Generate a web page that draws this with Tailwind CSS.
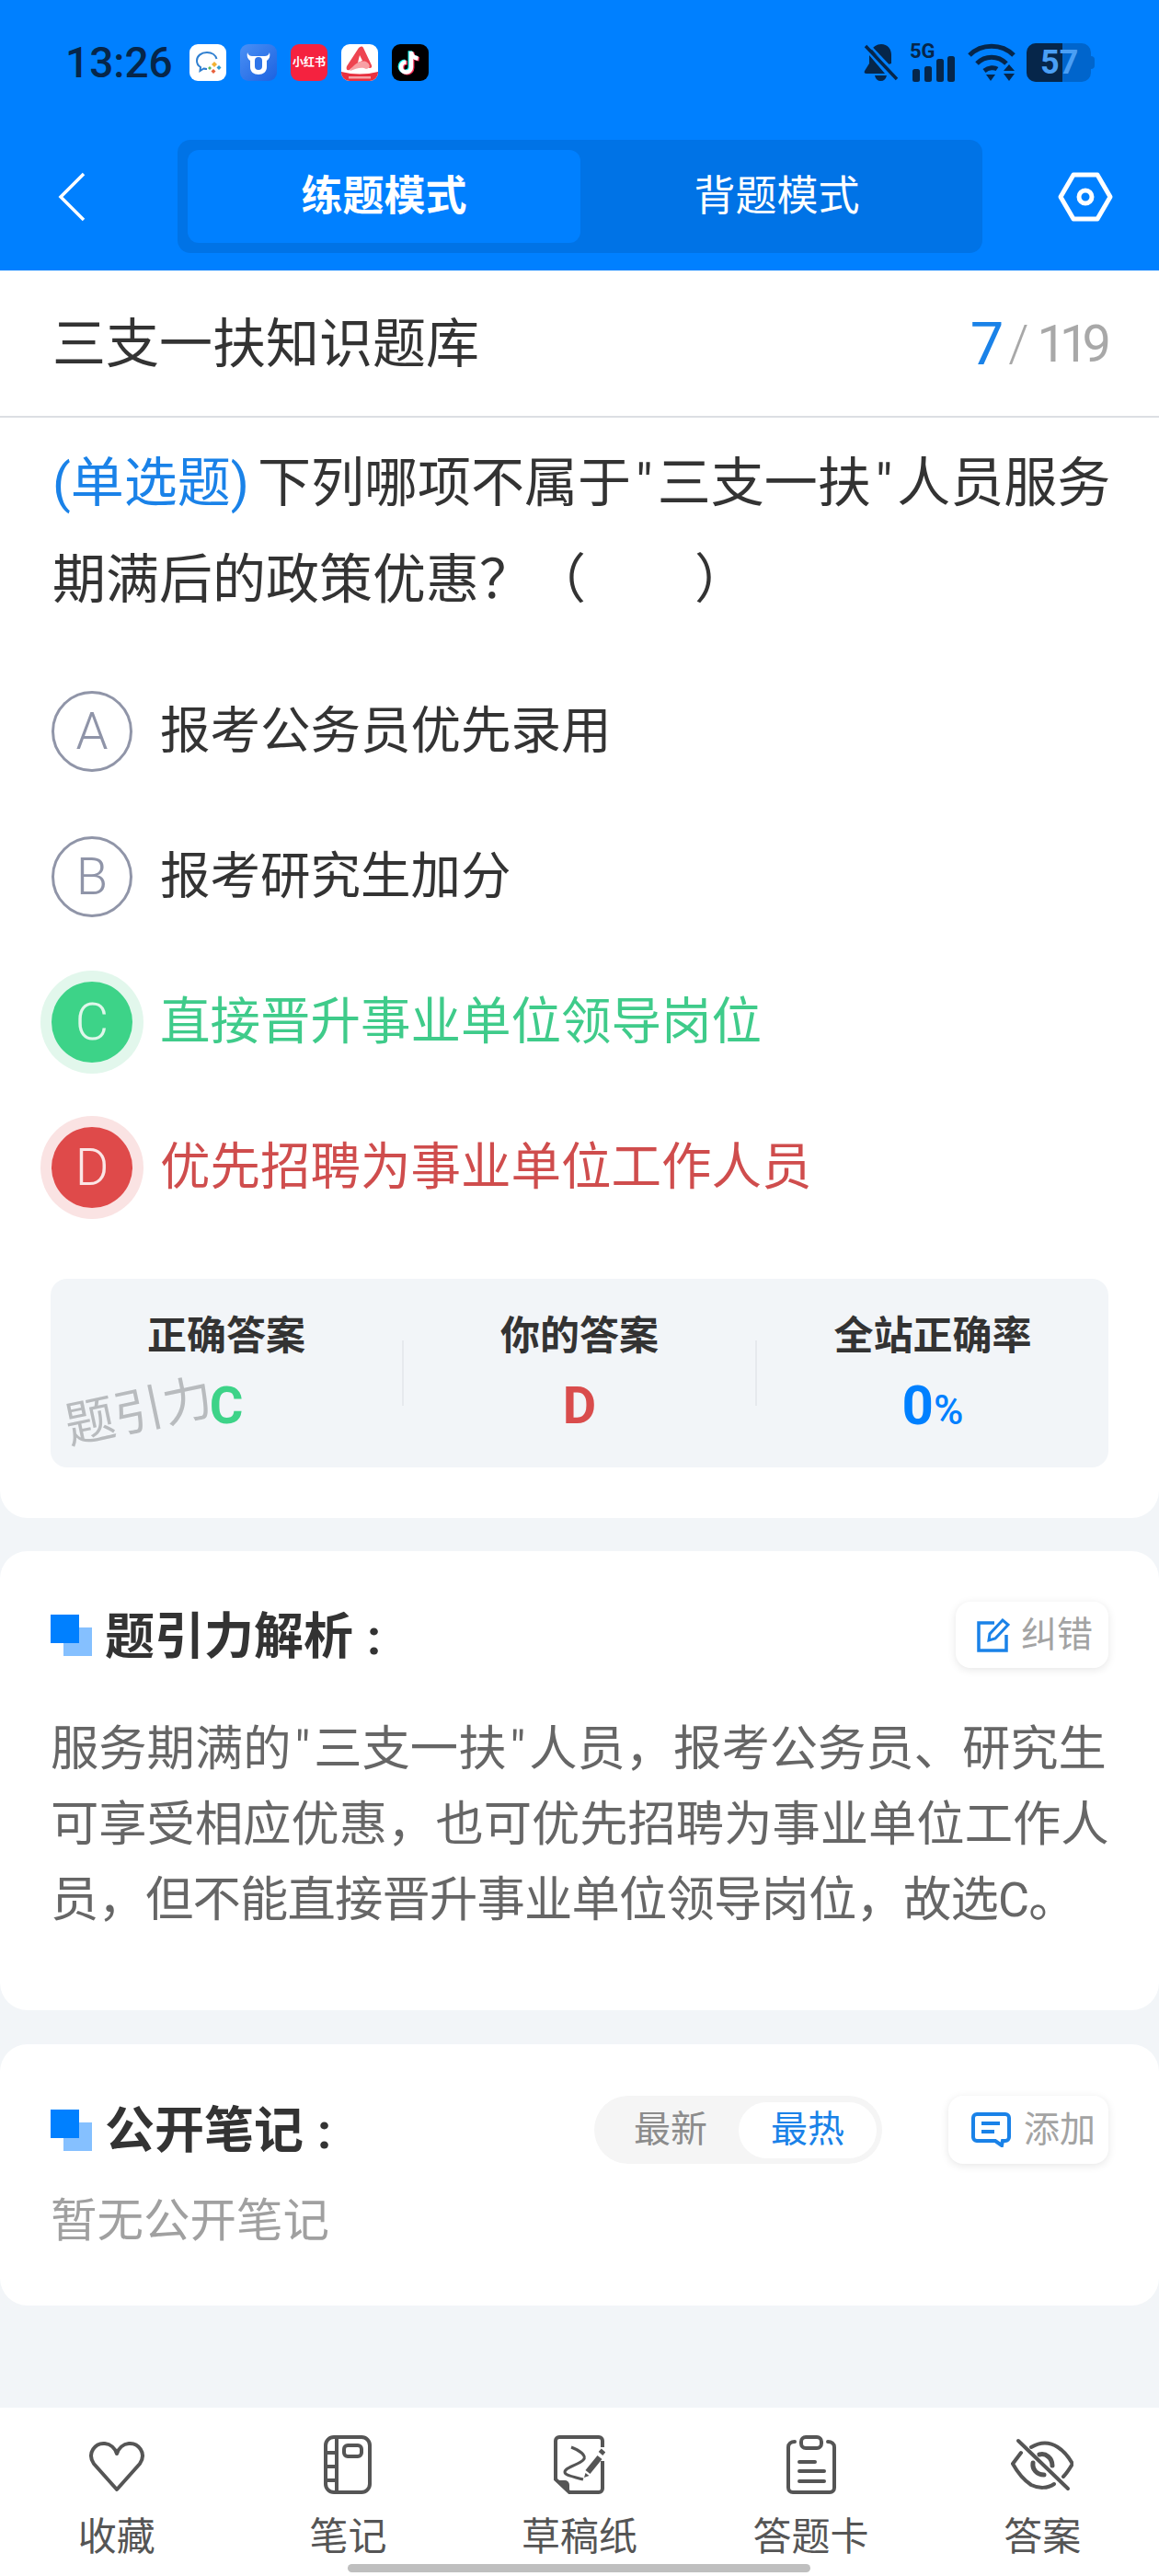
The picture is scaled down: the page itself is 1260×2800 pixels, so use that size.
<!DOCTYPE html>
<html lang="zh">
<head>
  <meta charset="UTF-8">
  <meta name="viewport" content="width=device-width, initial-scale=1.0">
  <title>练题模式</title>
  <script src="https://cdn.jsdelivr.net/npm/@tailwindcss/browser@4"></script>
</head>
<body>
<div class="relative w-[1260px] h-[2800px] overflow-hidden flex flex-col bg-[#f2f5f8] font-['Roboto','Noto_Sans_CJK_SC',sans-serif]">

  <!-- header -->
  <header class="h-[294px] shrink-0 bg-[#0080ff]">
    <div class="h-[136px] mb-4 flex items-center justify-between pl-[71px] pr-[70px]">
      <div class="flex items-center">
        <span class="w-[135px] text-[46px] leading-none font-medium text-[#06264a]">13:26</span>
        <div class="flex items-center gap-[15px]">
          <svg class="w-10 h-10" viewBox="0 0 40 40"><rect width="40" height="40" rx="9" fill="#fff"/><path d="M19 9c-6.500 0-11 4-11 9 0 3 1.500 5.500 4 7l-.5 4 4-2.500c1 .3 2.500.5 3.500.5" fill="none" stroke="#2f7fd0" stroke-width="2"/><path d="M19 9c5.500 0 9.500 3 10.500 7" fill="none" stroke="#2f7fd0" stroke-width="2"/><path d="M27 19l3 3-3 3-3-3z" fill="#f2b233"/><path d="M32 23l2.500 2.500-2.500 2.500-2.500-2.500z" fill="#2f9ad0"/><path d="M26 27l2.500 2.500-2.500 2.500-2.500-2.500z" fill="#e8603c"/><path d="M22 24l2 2-2 2-2-2z" fill="#5cb85c"/></svg>
          <svg class="w-10 h-10" viewBox="0 0 40 40"><defs><linearGradient id="ox" x1="0" y1="0" x2="1" y2="1"><stop offset="0" stop-color="#4a90f5"/><stop offset="1" stop-color="#1c62e0"/></linearGradient></defs><rect width="40" height="40" rx="9" fill="url(#ox)"/><path d="M8 9c1 3 3 4 5 4h14c2 0 4-1 5-4 1 4 0 7-3 9v7c0 5-4 8-9 8s-9-3-9-8v-7c-3-2-4-5-3-9z" fill="#fff"/><rect x="16" y="14" width="8" height="14" rx="4" fill="#2f74e8"/></svg>
          <div class="w-10 h-10 rounded-[9px] bg-[#f5223f] flex items-center justify-center text-[12px] leading-none font-bold text-white whitespace-nowrap">小红书</div>
          <svg class="w-10 h-10" viewBox="0 0 40 40"><rect width="40" height="40" rx="9" fill="#fff"/><path d="M0 30q20 5 40 0v1a9 9 0 0 1-9 9H9a9 9 0 0 1-9-9z" fill="#e8303f"/><rect x="8" y="35" width="24" height="2.500" fill="#f5a3a8"/><path d="M19 4c2-2 4-2 5 0l9 19c1 3-2 4-4 2l-4-5c-5-2-11 4-16 8-3 1-4-1-3-4z" fill="#ee4450"/><path d="M20 12l3 6-5 2z" fill="#fff"/><path d="M9 29c5-7 11-12 18-10 4 2 6 7 0 8-5-3-11 0-18 2z" fill="#f8a0a5"/></svg>
          <svg class="w-10 h-10" viewBox="0 0 40 40"><rect width="40" height="40" rx="9" fill="#000"/><path d="M21 8v17a5.500 5.500 0 1 1-5.500-5.500M21 8c0 4 3 7 7.500 7.500" fill="none" stroke="#25f4ee" stroke-width="4.500" transform="translate(-1.200 -.8)"/><path d="M21 8v17a5.500 5.500 0 1 1-5.500-5.500M21 8c0 4 3 7 7.500 7.500" fill="none" stroke="#fe2c55" stroke-width="4.500" transform="translate(1.200 .8)"/><path d="M21 8v17a5.500 5.500 0 1 1-5.500-5.500M21 8c0 4 3 7 7.500 7.500" fill="none" stroke="#fff" stroke-width="4.500"/></svg>
        </div>
      </div>
      <div class="flex items-center">
        <svg class="w-[38px] h-[42px]" viewBox="0 0 38 42" fill="#06264a"><path d="M8 8C10 4 14 1 19 1c7 0 11 5 11 12v9l-3 1z"/><path d="M6 13v9l-5 8c-1 2 0 3 2 3h20z"/><path d="M12 35h13c-1 4-3 6-6.500 6S13 39 12 35z"/><path d="M2 3l34 36" stroke="#06264a" stroke-width="3.500"/><path d="M5 1l34 36" stroke="#0080ff" stroke-width="2.500"/></svg>
        <div class="relative w-[50px] h-[42px] ml-[12px]">
          <span class="absolute left-0 -top-[2px] text-[22px] leading-none font-bold text-[#06264a]">5G</span>
          <svg class="absolute left-0 top-0 w-[50px] h-[42px]" viewBox="0 0 50 42" fill="#06264a"><rect x="3" y="28" width="8" height="14" rx="2.500"/><rect x="16" y="25" width="8" height="17" rx="2.500"/><rect x="29" y="17" width="8" height="25" rx="2.500"/><rect x="41" y="14" width="8" height="28" rx="2.500"/></svg>
        </div>
        <svg class="w-[52px] h-[42px] ml-[13px]" viewBox="0 0 52 42" fill="none" stroke="#06264a" stroke-width="5"><path d="M2 13C15 0 37 0 50 13"/><path d="M10 22c9-9 23-9 32 0"/><path d="M18 30c5-4 11-4 14-2"/><path d="M20 34h10l-5 7z" fill="#06264a" stroke="none"/><path d="M45 23l6 7H39z" fill="#06264a" stroke="none"/><path d="M39 33h12l-6 8z" fill="#06264a" stroke="none"/></svg>
        <div class="relative w-[74px] h-[42px] ml-[12px]">
          <div class="absolute left-0 top-0 w-[70px] h-[42px] rounded-[10px] bg-[#0065cc] overflow-hidden"><div class="w-[39px] h-full bg-[#06264a]"></div></div>
          <div class="absolute right-0 top-[14px] w-[4px] h-[14px] rounded-r-full bg-[#0065cc]"></div>
          <span class="absolute left-[15px] top-[3px] text-[36px] leading-[36px] font-bold text-[#4a9ff5]">57</span>
        </div>
      </div>
    </div>
    <div class="flex items-center pl-[60px]">
      <svg class="w-9 h-[54px]" viewBox="0 0 36 54" fill="none" stroke="#fff" stroke-width="3.500"><path d="M31 2 6 27l25 25"/></svg>
      <div class="ml-[97px] w-[875px] h-[123px] p-[11px] rounded-[14px] bg-[#0073e6] flex">
        <div class="w-[427px] rounded-[12px] bg-[#0080ff] flex items-center justify-center text-[45px] font-bold text-white">练题模式</div>
        <div class="w-[425px] ml-[1px] flex items-center justify-center text-[45px] text-white">背题模式</div>
      </div>
      <svg class="ml-[82px] w-[60px] h-[54px]" viewBox="0 0 60 54" fill="none" stroke="#fff" stroke-width="5" stroke-linejoin="round"><path d="M17 3h26l14 24-14 24H17L3 27z"/><circle cx="30" cy="27" r="7"/></svg>
    </div>
  </header>

  <!-- question card -->
  <section class="h-[1356px] shrink-0 bg-white rounded-b-[30px]">
    <div class="h-[160px] pt-[2px] px-[57px] flex items-center justify-between border-b-2 border-[#dcdfe3]">
      <h1 class="text-[58px] font-normal text-[#333]">三支一扶知识题库</h1>
      <div class="flex items-center text-[#a8a8a8]">
        <span class="text-[65px] leading-[70px] text-[#1a82e8]">7</span>
        <span class="ml-[5px] text-[56px] leading-[70px] font-light">/</span>
        <span class="ml-[9px] text-[56px] leading-[70px] tracking-[-7px] mr-[2px]">119</span>
      </div>
    </div>
    <p class="mt-[19px] px-[57px] text-[58px] leading-[105px] text-[#333] whitespace-nowrap"><span class="text-[#1a82e8]">(单选题)</span><span class="ml-[9px]">下列哪项不属于</span><span class="px-[5px]">"</span>三支一扶<span class="px-[5px]">"</span>人员服务<br>期满后的政策优惠？（<span class="inline-block w-[118px]"></span>）</p>

    <div class="mt-[33px] pl-[56px]">
      <div class="h-[158px] flex items-center">
        <div class="w-[88px] h-[88px] rounded-full border-[3px] border-[#9095a8] flex items-center justify-center text-[56px] font-light text-[#8f94a8]">A</div>
        <span class="ml-[30px] text-[54.500px] text-[#333]">报考公务员优先录用</span>
      </div>
      <div class="h-[158px] flex items-center">
        <div class="w-[88px] h-[88px] rounded-full border-[3px] border-[#9095a8] flex items-center justify-center text-[56px] font-light text-[#8f94a8]">B</div>
        <span class="ml-[30px] text-[54.500px] text-[#333]">报考研究生加分</span>
      </div>
      <div class="h-[158px] flex items-center">
        <div class="w-[88px] h-[88px] rounded-full bg-[#3dd388] ring-[12px] ring-[#e2f7ec] flex items-center justify-center text-[56px] font-light text-[#dff7ea]">C</div>
        <span class="ml-[30px] text-[54.500px] text-[#3fcb8a]">直接晋升事业单位领导岗位</span>
      </div>
      <div class="h-[158px] flex items-center">
        <div class="w-[88px] h-[88px] rounded-full bg-[#df4a4a] ring-[12px] ring-[#fae3e3] flex items-center justify-center text-[56px] font-light text-[#fbe6e6]">D</div>
        <span class="ml-[30px] text-[54.500px] text-[#cf4d4d]">优先招聘为事业单位工作人员</span>
      </div>
    </div>

    <div class="relative mt-[42px] mx-[55px] h-[205px] rounded-[18px] bg-[#f2f5f8] flex">
      <div class="flex-1 pt-[37px] flex flex-col items-center">
        <span class="text-[43px] leading-[50px] font-bold text-[#333]">正确答案</span>
        <span class="mt-[21px] text-[56px] leading-[60px] font-bold text-[#3dd388]">C</span>
      </div>
      <div class="w-[2px] h-[71px] self-center bg-[#e6e9ed]"></div>
      <div class="flex-1 pt-[37px] flex flex-col items-center">
        <span class="text-[43px] leading-[50px] font-bold text-[#333]">你的答案</span>
        <span class="mt-[21px] text-[56px] leading-[60px] font-bold text-[#d94c4c]">D</span>
      </div>
      <div class="w-[2px] h-[71px] self-center bg-[#e6e9ed]"></div>
      <div class="flex-1 pt-[37px] flex flex-col items-center">
        <span class="text-[43px] leading-[50px] font-bold text-[#333]">全站正确率</span>
        <span class="mt-[21px] text-[60px] leading-[60px] font-bold text-[#0080ff]">0<span class="text-[44px] font-medium">%</span></span>
      </div>
      <span class="absolute left-[15px] top-[115px] -rotate-[12deg] text-[54px] leading-[60px] text-[#b8bbbe] whitespace-nowrap">题引力</span>
    </div>
  </section>

  <!-- analysis card -->
  <section class="mt-[36px] h-[499px] shrink-0 bg-white rounded-[30px] px-[55px] pt-[55px]">
    <div class="h-[72px] flex items-center justify-between">
      <div class="flex items-center">
        <svg class="w-[45px] h-[45px]" viewBox="0 0 45 45"><rect x="14" y="14" width="31" height="31" fill="#85c0ff"/><rect width="31" height="31" fill="#0080ff"/></svg>
        <h2 class="ml-[14px] pt-[4px] text-[54px] font-bold text-[#333]">题引力解析<span class="ml-[15px]">:</span></h2>
      </div>
      <div class="w-[166px] h-[72px] rounded-[16px] bg-white shadow-[0_2px_10px_rgba(0,0,0,0.1)] flex items-center pl-[23px]">
        <svg class="w-9 h-[38px]" viewBox="0 0 36 38" fill="none" stroke="#1a82e8" stroke-width="3.500"><path d="M19 6H2v30h30V19"/><path d="M13 25l1-7L28 3l6 5-14 15z" stroke-width="3"/></svg>
        <span class="ml-[12px] text-[39px] text-[#a3a3a3]">纠错</span>
      </div>
    </div>
    <p class="mt-[47px] text-[52.300px] leading-[82px] text-[#666] whitespace-nowrap">服务期满的<span class="px-[4px]">"</span>三支一扶<span class="px-[4px]">"</span>人员，报考公务员、研究生<br>可享受相应优惠，也可优先招聘为事业单位工作人<br><span class="tracking-[-0.8px]">员，但不能直接晋升事业单位领导岗位，故选C。</span></p>
  </section>

  <!-- notes card -->
  <section class="mt-[37px] h-[284px] shrink-0 bg-white rounded-[30px] px-[55px] pt-[56px]">
    <div class="h-[74px] flex items-center">
      <svg class="w-[45px] h-[45px]" viewBox="0 0 45 45"><rect x="14" y="14" width="31" height="31" fill="#85c0ff"/><rect width="31" height="31" fill="#0080ff"/></svg>
      <h2 class="ml-[14px] pt-[2px] text-[54px] font-bold text-[#333]">公开笔记<span class="ml-[15px]">:</span></h2>
      <div class="ml-auto w-[313px] h-[74px] rounded-full bg-[#f5f5f5] flex items-center pl-[43px] pr-[6px] text-[40px]">
        <span class="text-[#8c8c8c]">最新</span>
        <span class="ml-auto w-[150px] h-[61px] rounded-full bg-white flex items-center justify-center text-[#1a82e8]">最热</span>
      </div>
      <div class="ml-[72px] w-[174px] h-[74px] rounded-[16px] bg-white shadow-[0_2px_10px_rgba(0,0,0,0.1)] flex items-center pl-[25px]">
        <svg class="w-[43px] h-[38px]" viewBox="0 0 43 38" fill="none" stroke="#1a82e8" stroke-width="4"><path d="M6 2h31a4 4 0 0 1 4 4v21a4 4 0 0 1-4 4h-3l-1 5-7-5H6a4 4 0 0 1-4-4V6a4 4 0 0 1 4-4z"/><path d="M11 12h20M11 21h14"/></svg>
        <span class="ml-[14px] text-[39px] text-[#a3a3a3]">添加</span>
      </div>
    </div>
    <p class="mt-[32px] text-[50.500px] leading-[60px] text-[#a0a0a0]">暂无公开笔记</p>
  </section>

  <!-- bottom bar -->
  <nav class="mt-auto h-[183px] shrink-0 bg-white grid grid-cols-5 px-[1px] text-[42px] text-[#555]">
    <div class="flex flex-col items-center">
      <svg class="mt-[36px] w-[62px] h-[56px]" viewBox="0 0 62 56" fill="none" stroke="#555" stroke-width="4" stroke-linejoin="round"><path d="M31 53 6 25C-2 13 8 2 18 3c6 .5 11 5 13 11 2-6 7-10.500 13-11 10-1 20 10 12 22z"/></svg>
      <span class="mt-[20px] leading-[58px]">收藏</span>
    </div>
    <div class="flex flex-col items-center">
      <svg class="mt-[30px] w-[52px] h-[64px]" viewBox="0 0 52 64" fill="none" stroke="#555" stroke-width="4"><rect x="2" y="2" width="48" height="60" rx="9"/><path d="M14 2v60M2 19h12M2 34h12M2 49h12"/><rect x="22" y="11" width="19" height="12" rx="4"/></svg>
      <span class="mt-[18px] leading-[58px]">笔记</span>
    </div>
    <div class="flex flex-col items-center">
      <svg class="mt-[30px] w-[56px] h-[64px]" viewBox="0 0 56 64" fill="none" stroke="#555" stroke-width="4"><path d="M53 13V6a4 4 0 0 0-4-4H6a4 4 0 0 0-4 4v42l15 14h32a4 4 0 0 0 4-4V28"/><path d="M3 49l14 13v-8a5 5 0 0 0-5-5z" fill="#555" stroke="none"/><path d="M19 13c8 3 18 9 13 14-5 5-20 8-20 13 0 4 10 5 20 8" stroke-width="3"/><path d="M37 40l13-16" stroke-width="6.500"/><path d="M33 46l1.500-5 4 3z" fill="#555" stroke="none"/><path d="M51 20l3-3.500" stroke-width="6"/></svg>
      <span class="mt-[18px] leading-[58px]">草稿纸</span>
    </div>
    <div class="flex flex-col items-center">
      <svg class="mt-[30px] w-[54px] h-[64px]" viewBox="0 0 54 64" fill="none" stroke="#555" stroke-width="4" stroke-linecap="round"><path d="M9 7c-4 0-7 2-7 6v44c0 3 2 5 5 5h40c3 0 5-2 5-5V13c0-4-3-6-7-6"/><rect x="16" y="2" width="22" height="12" rx="5"/><path d="M14 29h17M14 39h27M14 50h27"/></svg>
      <span class="mt-[18px] leading-[58px]">答题卡</span>
    </div>
    <div class="flex flex-col items-center">
      <svg class="mt-[33px] w-[68px] h-[60px]" viewBox="0 0 68 60" fill="none" stroke="#555" stroke-width="4" stroke-linecap="round"><path d="M8 3l54 52"/><path d="M22 10c10-6 20-6 29 0 8 5 12 11 16 18-3 5-6 10-10 14"/><path d="M11 16 2 28c5 9 11 17 20 23 8 4 18 4 25-1"/><path d="M31 18c7-2 14 4 14 12" stroke-width="5"/><path d="M24 27c-1 7 4 13 12 13" stroke-width="5"/></svg>
      <span class="mt-[19px] leading-[58px]">答案</span>
    </div>
  </nav>

  <!-- home indicator -->
  <div class="absolute left-[378px] bottom-[4px] w-[503px] h-[9px] rounded-full bg-[#bfbfbf]"></div>
</div>
</body>
</html>
